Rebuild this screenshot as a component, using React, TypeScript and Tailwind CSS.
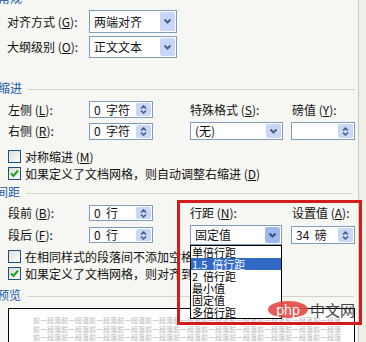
import React from "react";

const blue = "text-[#1e5aa8]";

function Key({ k, colon = true }: { k: string; colon?: boolean }) {
  return (
    <span>
      {" "}(<u>{k}</u>){colon ? ":" : ""}
    </span>
  );
}

function Chevron({ dark }: { dark?: boolean }) {
  return (
    <svg width="9" height="7" viewBox="0 0 9 7">
      <path d="M1.5 1.5 L4.5 4.5 L7.5 1.5" fill="none" stroke={dark ? "#3b4f7a" : "#4d6185"} strokeWidth="2" />
    </svg>
  );
}

function Dropdown({ value, w, h, active }: { value: string; w: string; h: string; active?: boolean }) {
  return (
    <div className={`${w} ${h} flex items-center border border-[#7f9db9] bg-white`}>
      <div className="flex-1 pl-[4px] leading-none whitespace-pre">{value}</div>
      <div
        className={`mr-[1px] flex h-[calc(100%-2px)] w-[15px] items-center justify-center rounded-[2px] ${
          active ? "bg-[#9fb8ec]" : "bg-[#c8d7f8]"
        }`}
      >
        <Chevron dark={active} />
      </div>
    </div>
  );
}

function Spin({ value, h = "h-[17px]" }: { value: string; h?: string }) {
  return (
    <div className={`w-[64px] ${h} flex items-center border border-[#7f9db9] bg-white`}>
      <div className="flex-1 pl-[4px] leading-none whitespace-pre">{value}</div>
      <div className="mr-[1px] flex h-[calc(100%-2px)] w-[15px] flex-col items-center justify-center gap-[1px] rounded-[2px] bg-[#c8d7f8]">
        <svg width="7" height="4" viewBox="0 0 7 4">
          <path d="M1 3.5 L3.5 1 L6 3.5" fill="none" stroke="#4d6185" strokeWidth="1.6" />
        </svg>
        <svg width="7" height="4" viewBox="0 0 7 4">
          <path d="M1 0.5 L3.5 3 L6 0.5" fill="none" stroke="#4d6185" strokeWidth="1.6" />
        </svg>
      </div>
    </div>
  );
}

function Check({ checked }: { checked?: boolean }) {
  return (
    <div className="flex h-[13px] w-[13px] items-center justify-center border border-[#1c5180] bg-gradient-to-br from-[#dcdcd6] to-white">
      {checked && (
        <svg width="9" height="9" viewBox="0 0 9 9">
          <path d="M1 4.5 L3.5 7 L8 1.5" fill="none" stroke="#21a121" strokeWidth="2" />
        </svg>
      )}
    </div>
  );
}

function Header({ text, shift }: { text: string; shift: string }) {
  return (
    <div className="flex h-[14px] items-center">
      <span className={`${blue} ${shift} w-[30px] leading-none`}>{text}</span>
      <div className="mt-[2px] h-px w-[327px] bg-[#d3d3c7]" />
    </div>
  );
}

function CheckRow({ checked, children, mt }: { checked?: boolean; children: React.ReactNode; mt: string }) {
  return (
    <div className={`${mt} flex h-[13px] items-center pl-[8px]`}>
      <Check checked={checked} />
      <span className="ml-[4px] whitespace-nowrap leading-none">{children}</span>
    </div>
  );
}

const items = ["单倍行距", "1.5  倍行距", "2  倍行距", "最小值", "固定值", "多倍行距"];

export default function App() {
  return (
    <div className="relative h-[342px] w-[366px] overflow-hidden bg-[#f0f0ea] font-['Noto_Sans_CJK_SC',sans-serif] text-[12px] text-[#111]">
      <div className="h-full w-[359px] border-r border-[#c9c9c0] bg-[#f6f6f2]">
        <div className="h-[5px] overflow-hidden">
          <div className={`${blue} mt-[-9px] ml-[-2px] leading-[14px]`}>常规</div>
        </div>

        <div className="mt-[5px] flex h-[23px] items-center">
          <div className="w-[89px] pl-[7px] leading-none">
            对齐方式<Key k="G" />
          </div>
          <Dropdown value="两端对齐" w="w-[88px]" h="h-[23px]" />
        </div>
        <div className="mt-[3px] flex h-[22px] items-center">
          <div className="w-[89px] pl-[7px] leading-none">
            大纲级别<Key k="O" />
          </div>
          <Dropdown value="正文文本" w="w-[88px]" h="h-[22px]" />
        </div>

        <div className="mt-[23px]">
          <Header text="缩进" shift="ml-[-2px]" />
        </div>

        <div className="mt-[6px] flex h-[17px] items-center">
          <div className="w-[89px] pl-[8px] leading-none">
            左侧<Key k="L" />
          </div>
          <Spin value="0  字符" />
          <div className="w-[37px]" />
          <div className="w-[102px] leading-none">
            特殊格式<Key k="S" />
          </div>
          <div className="leading-none">
            磅值<Key k="Y" />
          </div>
        </div>
        <div className="mt-[4px] flex h-[18px] items-center">
          <div className="w-[89px] pl-[8px] leading-none">
            右侧<Key k="R" />
          </div>
          <Spin value="0  字符" />
          <div className="w-[37px]" />
          <Dropdown value="(无)" w="w-[93px]" h="h-[18px]" />
          <div className="w-[8px]" />
          <Spin value="" h="h-[18px]" />
        </div>

        <CheckRow mt="mt-[10px]">
          对称缩进<Key k="M" colon={false} />
        </CheckRow>
        <CheckRow mt="mt-[4px]" checked>
          如果定义了文档网格，则自动调整右缩进 (<u>D</u>)
        </CheckRow>

        <div className="mt-[5px]">
          <Header text="间距" shift="ml-[-4px]" />
        </div>

        <div className="mt-[6px] flex h-[16px] items-center">
          <div className="w-[89px] pl-[8px] leading-none">
            段前<Key k="B" />
          </div>
          <Spin value="0  行" h="h-[16px]" />
          <div className="w-[37px]" />
          <div className="w-[102px] leading-none">
            行距<Key k="N" />
          </div>
          <div className="leading-none">
            设置值<Key k="A" />
          </div>
        </div>
        <div className="mt-[4px] flex h-[20px] items-center">
          <div className="w-[89px] pl-[8px] leading-none">
            段后<Key k="F" />
          </div>
          <Spin value="0  行" h="h-[16px]" />
          <div className="w-[37px]" />
          <Dropdown value="固定值" w="w-[92px]" h="h-[20px]" active />
          <div className="w-[9px]" />
          <Spin value="34  磅" h="h-[18px]" />
        </div>

        <CheckRow mt="mt-[5px]">在相同样式的段落间不添加空格 (<u>C</u>)</CheckRow>
        <CheckRow mt="mt-[4px]" checked>
          如果定义了文档网格，则对齐到网格 (<u>W</u>)
        </CheckRow>

        <div className="mt-[8px]">
          <Header text="预览" shift="ml-[-3px]" />
        </div>

        <div className="mt-[6px] ml-[8px] h-[60px] w-[347px] border border-black bg-white pt-[7px] pl-[24px] text-[7px] leading-[8.5px] text-[#b8b8b8]">
          <div>前一段落前一段落前一段落前一段落前一段落前一段落前一段落前一段落前一段落前一段落前一段落</div>
          <div>前一段落前一段落前一段落前一段落前一段落前一段落前一段落前一段落前一段落前一段落前一段落</div>
          <div>前一段落前一段落前一段落前一段落前一段落前一段落前一段落前一段落前一段落前一段落前一段落</div>
        </div>
      </div>

      {/* highlight frame */}
      <div className="absolute top-[200px] left-[177px] h-[125px] w-[185px] border-[3px] border-[#d41c1c]" />

      {/* open list of the line spacing dropdown */}
      <div className="absolute top-[245px] left-[190px] w-[92px] border border-black bg-white">
        {items.map((t, i) => (
          <div
            key={t}
            className={`flex h-[12px] items-center pl-[1px] text-[11px] leading-none whitespace-pre ${
              i === 1 ? "bg-[#316ac5] text-white" : "text-black"
            }`}
          >
            {t}
          </div>
        ))}
      </div>

      {/* watermark */}
      <div className="absolute top-[301px] left-[268px] flex items-center gap-[2px] opacity-90">
        <div className="flex h-[17px] w-[40px] items-center justify-center rounded-[50%] bg-[#e54a45] font-['Liberation_Sans',sans-serif] text-[14px] leading-none text-white">
          php
        </div>
        <div className="text-[15px] leading-none text-[#333]">中文网</div>
      </div>
    </div>
  );
}
